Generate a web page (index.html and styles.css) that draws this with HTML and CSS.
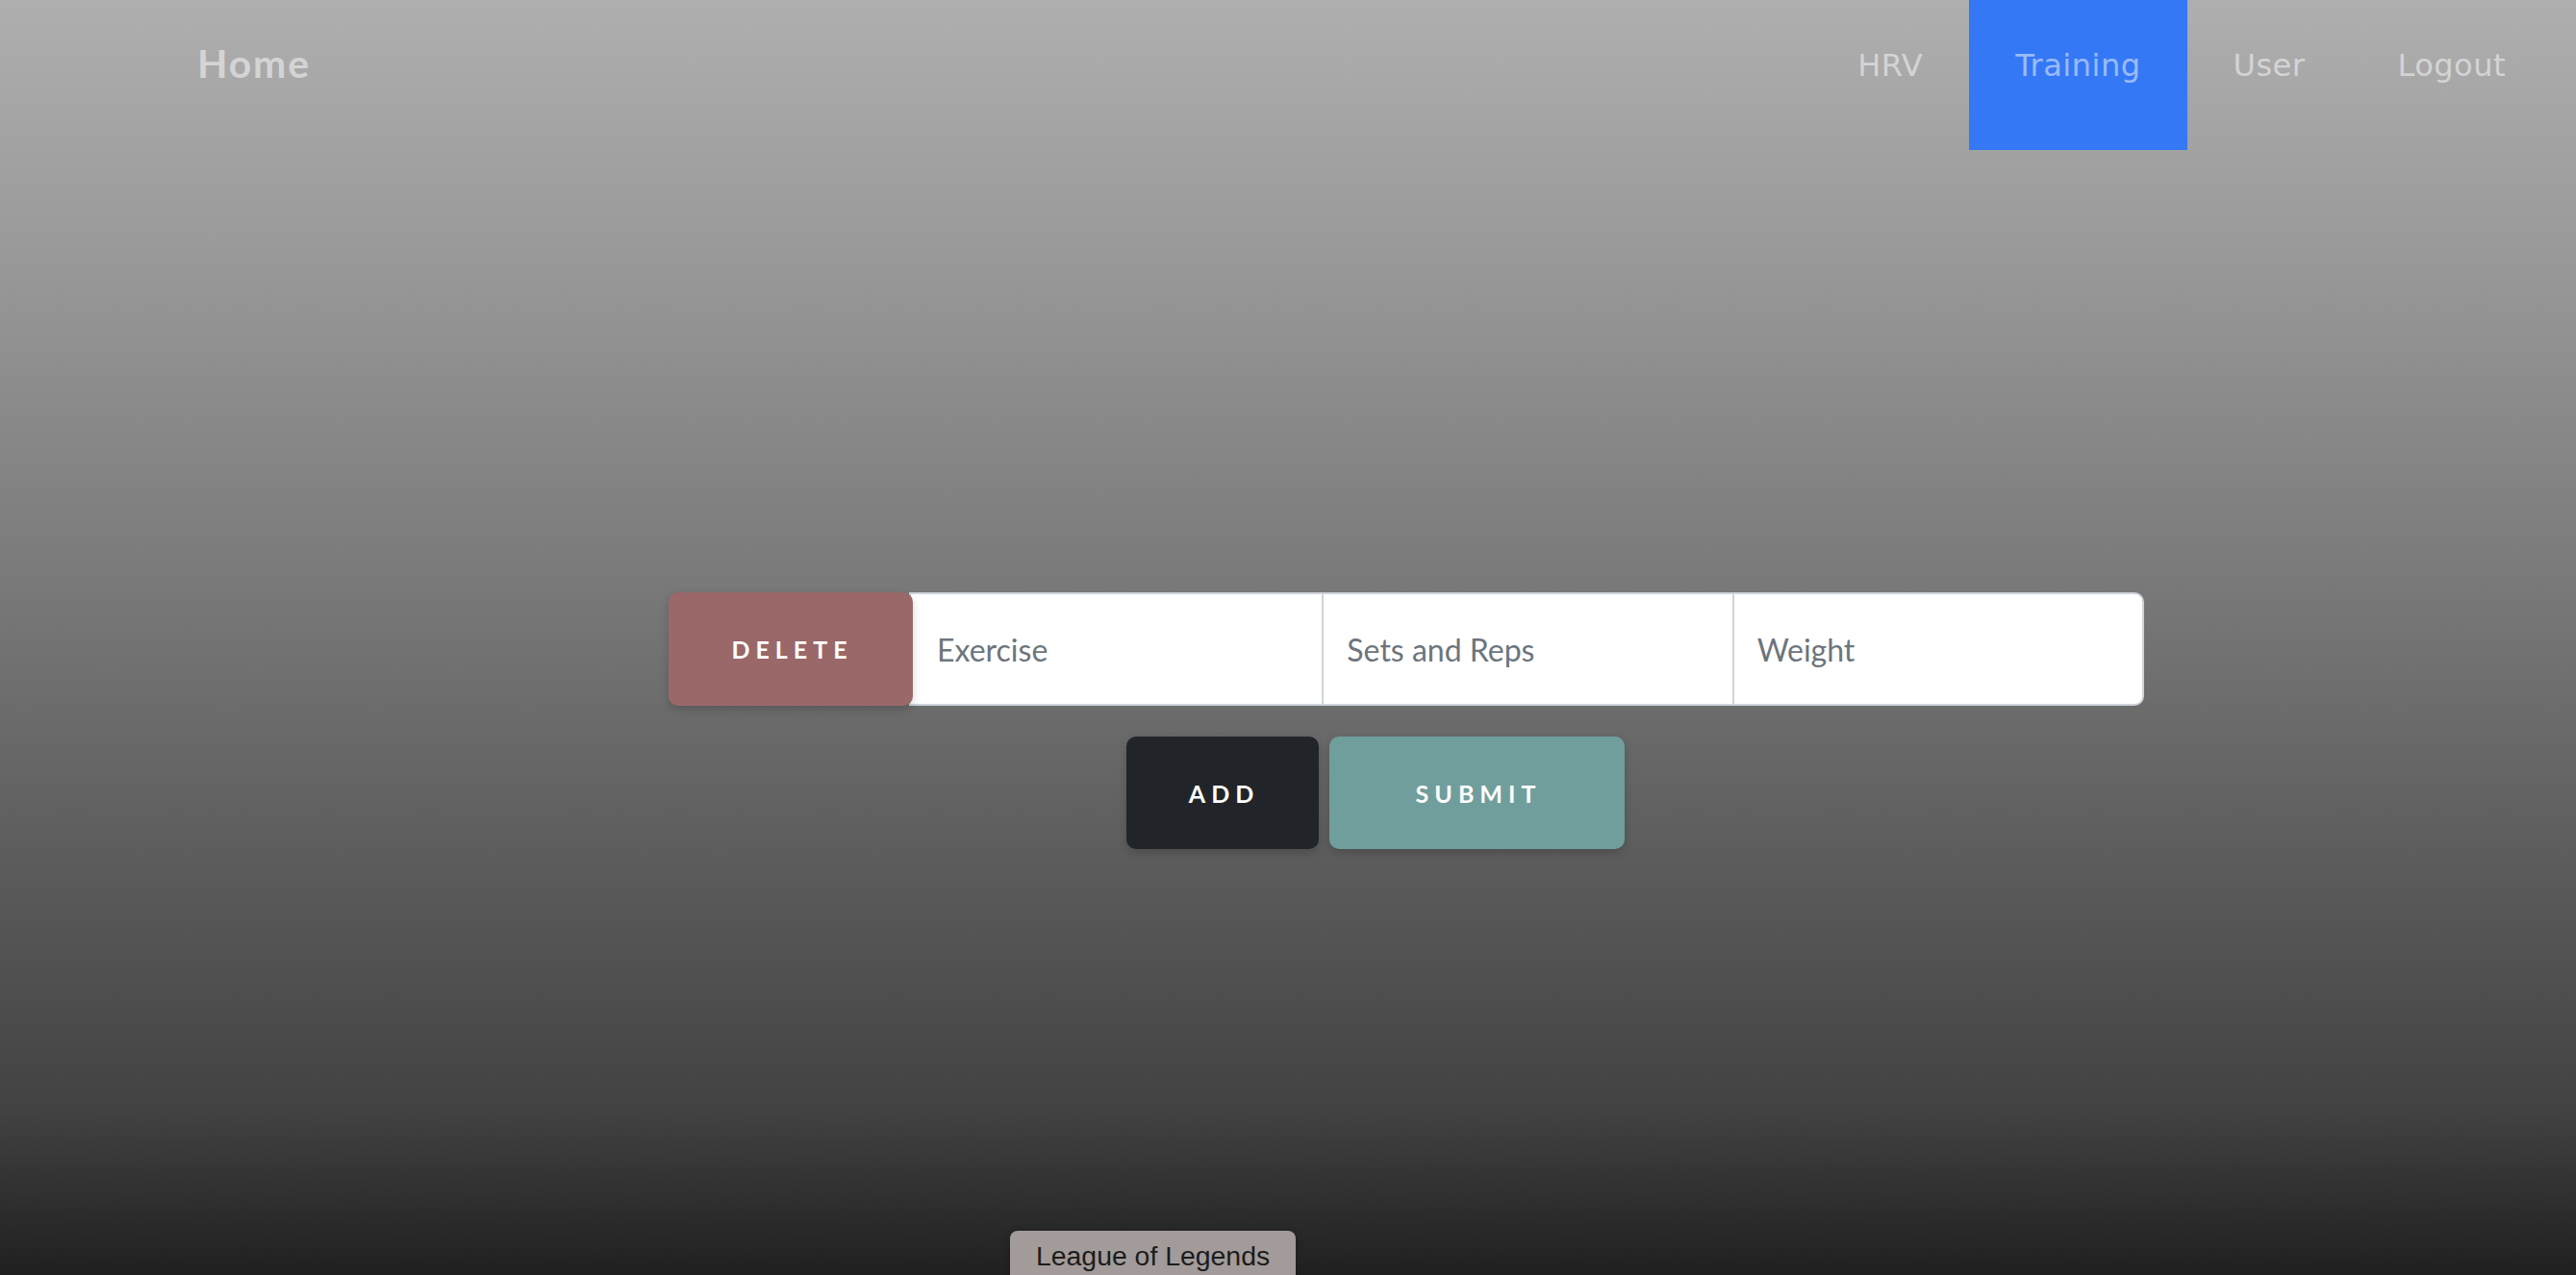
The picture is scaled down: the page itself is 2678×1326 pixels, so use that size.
FILE: index.html
```html
<!DOCTYPE html>
<html lang="en">
<head>
<meta charset="utf-8">
<title>Training</title>
<link rel="stylesheet" href="styles.css">
</head>
<body>
<nav class="navbar">
  <a class="brand" href="#">Home</a>
  <ul class="nav-links">
    <li><a class="nav-link" href="#">HRV</a></li>
    <li><a class="nav-link active" href="#">Training</a></li>
    <li><a class="nav-link" href="#">User</a></li>
    <li><a class="nav-link" href="#">Logout</a></li>
  </ul>
</nav>
<main class="content">
  <form class="entry-form">
    <div class="input-group">
      <button type="button" class="btn btn-delete">Delete</button>
      <input class="field" type="text" placeholder="Exercise">
      <input class="field" type="text" placeholder="Sets and Reps">
      <input class="field field-last" type="text" placeholder="Weight">
    </div>
    <div class="actions">
      <button type="button" class="btn btn-add">Add</button>
      <button type="submit" class="btn btn-submit">Submit</button>
    </div>
  </form>
  <div class="tag">League of Legends</div>
</main>
</body>
</html>
```
FILE: styles.css
```css
html {
  height: 100%;
  background: linear-gradient(to bottom, #afafaf 0%, #999999 20%, #7a7a7a 45%, #6a6a6a 57%, #424242 87%, #2a2a2a 96%, #202020 100%);
}
body {
  margin: 0;
  height: 100vh;
  overflow: hidden;
  font-family: "Lato", "Noto Sans", sans-serif;
}
.navbar {
  display: flex;
  justify-content: space-between;
  align-items: flex-start;
  height: 156px;
  padding: 0 25px 0 205px;
}
.brand {
  font-family: "Lato", sans-serif;
  font-weight: 700;
  font-size: 41px;
  letter-spacing: 1.8px;
  color: rgba(255, 255, 255, 0.5);
  text-decoration: none;
  line-height: 48px;
  padding-top: 42px;
}
.nav-links {
  display: flex;
  list-style: none;
  margin: 0;
  padding: 0;
}
.nav-link {
  display: block;
  height: 156px;
  box-sizing: border-box;
  padding: 49px 48px 0;
  font-family: "DejaVu Sans", sans-serif;
  font-size: 32px;
  letter-spacing: 0.5px;
  line-height: 38px;
  color: rgba(255, 255, 255, 0.5);
  text-decoration: none;
}
.nav-link.active {
  background: #3478f6;
}
.content {
  display: flex;
  flex-direction: column;
}
.entry-form {
  display: flex;
  flex-direction: column;
  margin-top: 460px;
}
.input-group {
  display: flex;
  margin-left: 695px;
  width: 1534px;
  height: 118px;
}
.btn {
  border: none;
  color: #fff;
  font-family: "Lato", sans-serif;
  font-weight: 700;
  font-size: 25px;
  letter-spacing: 6px;
  text-transform: uppercase;
  border-radius: 10px;
  box-shadow: 0 4px 10px rgba(0, 0, 0, 0.18);
  cursor: pointer;
  padding: 0 0 0 3px;
}
.btn-delete {
  width: 254px;
  flex: 0 0 254px;
  background: #9a6869;
  position: relative;
  z-index: 2;
}
.field {
  flex: 1 1 0;
  min-width: 0;
  box-sizing: border-box;
  height: 118px;
  margin: 0 0 0 -2px;
  padding: 0 0 0 24px;
  border: 2px solid #ced4da;
  background: #fff;
  font-family: "Lato", sans-serif;
  font-size: 32px;
  color: #495057;
  outline: none;
}
.btn-delete + .field {
  margin-left: -4px;
  padding-left: 27px;
}
.field::placeholder {
  color: #6c757d;
  opacity: 1;
}
.field-last {
  border-radius: 0 10px 10px 0;
}
.actions {
  display: flex;
  gap: 11px;
  margin: 32px 0 0 1171px;
}
.btn-add {
  width: 200px;
  height: 117px;
  background: #212529;
}
.btn-submit {
  width: 307px;
  height: 117px;
  background: #709e9c;
}
.tag {
  align-self: flex-start;
  margin: 397px 0 0 1050px;
  padding: 10px 27px 20px;
  background: #a29b99;
  border-radius: 8px;
  font-family: "Liberation Sans", Arial, sans-serif;
  font-size: 28.4px;
  line-height: 32px;
  color: #1c1c1c;
  box-shadow: 0 0 6px rgba(0, 0, 0, 0.25);
}
```
